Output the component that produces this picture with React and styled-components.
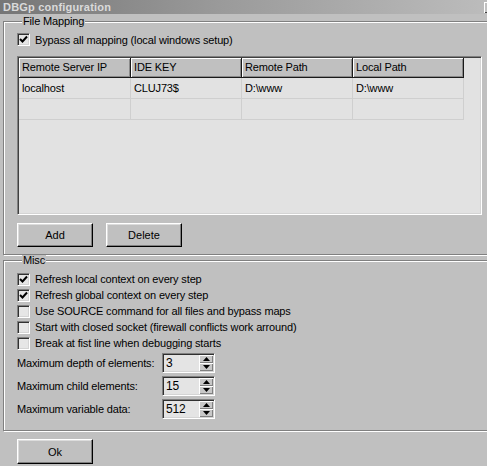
import React from 'react';
import styled, { createGlobalStyle } from 'styled-components';

const GlobalStyle = createGlobalStyle`
  html, body {
    margin: 0;
    padding: 0;
    background: #c0c0c0;
  }
  body {
    font-family: 'Liberation Sans', Arial, sans-serif;
    font-size: 11px;
    letter-spacing: -0.15px;
    color: #000;
  }
`;

const Window = styled.div`
  width: 487px;
  height: 466px;
  overflow: hidden;
  background: #c0c0c0;
`;

const TitleBar = styled.div`
  height: 14px;
  display: flex;
  align-items: center;
  justify-content: space-between;
  padding-left: 3px;
  background: linear-gradient(to right, #767676 0%, #9a9a9a 45%, #bcbcbc 100%);
  color: #dadada;
  font-weight: bold;
  font-size: 11px;
  letter-spacing: 0.2px;
`;

const TitleButton = styled.span`
  width: 14px;
  height: 11px;
  margin-right: -11px;
  background: #c0c0c0;
  box-shadow: inset 1px 1px #fff, inset -1px -1px #404040;
`;

const Body = styled.div`
  padding: 2px 0 0 3px;
  width: 520px;
`;

const Group = styled.fieldset`
  margin: 0;
  padding: ${(p) => p.$pad};
  min-inline-size: 0;
  border: 1px solid #808080;
  box-shadow: inset 1px 1px #fff, 1px 1px #fff;
  display: flex;
  flex-direction: column;
`;

const Legend = styled.legend`
  margin-left: 5px;
  padding: 0 1px;
  line-height: 11px;
  font-size: 11px;
  background: #c0c0c0;
`;

const CheckRow = styled.label`
  display: flex;
  align-items: center;
  gap: 5px;
  height: ${(p) => p.$h || 16}px;
  white-space: nowrap;
`;

const Box = styled.span`
  width: 13px;
  height: 13px;
  box-sizing: border-box;
  background: #e6e6e6;
  border-top: 1px solid #808080;
  border-left: 1px solid #808080;
  border-right: 1px solid #fff;
  border-bottom: 1px solid #fff;
  box-shadow: inset 1px 1px #303030, inset -1px -1px #d4d4d4;
  display: flex;
  align-items: center;
  justify-content: center;
`;

const Checkbox = ({ checked }) => (
  <Box>
    {checked && (
      <svg width="9" height="9" viewBox="0 0 9 9">
        <path d="M1 4 L3.5 6.5 L8 1.5" fill="none" stroke="#000" strokeWidth="2" />
      </svg>
    )}
  </Box>
);

const TablePanel = styled.div`
  margin-top: 10px;
  width: 465px;
  height: 159px;
  box-sizing: border-box;
  background: #e2e2e2;
  border-top: 1px solid #808080;
  border-left: 1px solid #808080;
  border-right: 1px solid #fff;
  border-bottom: 1px solid #fff;
  box-shadow: inset 1px 1px #404040, inset -1px -1px #d4d4d4;
  padding: 1px;
`;

const Grid = styled.div`
  display: grid;
  grid-template-columns: 112px 111px 111px 111px;
`;

const HeadCell = styled.div`
  height: 20px;
  box-sizing: border-box;
  padding-left: 3px;
  line-height: 19px;
  background: #c0c0c0;
  border-right: 1px solid #1a1a1a;
  border-bottom: 1px solid #1a1a1a;
  box-shadow: inset 1px 1px #fff, inset -1px -1px #8a8a8a;
  white-space: nowrap;
`;

const Cell = styled.div`
  height: 21px;
  box-sizing: border-box;
  padding-left: 3px;
  line-height: 20px;
  border-right: 1px solid #cfcfcf;
  border-bottom: 1px solid #cfcfcf;
  white-space: nowrap;
`;

const ButtonRow = styled.div`
  display: flex;
  gap: 13px;
  margin-top: 8px;
`;

const Button = styled.button`
  width: 76px;
  height: ${(p) => p.$h || 24}px;
  padding: 0;
  font-family: inherit;
  font-size: 11px;
  color: #000;
  background: #c0c0c0;
  border: none;
  border-top: 1px solid #fff;
  border-left: 1px solid #fff;
  border-right: 1px solid #000;
  border-bottom: 1px solid #000;
  box-shadow: inset -1px -1px #808080, inset 1px 1px #dcdcdc;
`;

const SpinList = styled.div`
  display: flex;
  flex-direction: column;
  gap: 3px;
  margin-top: 2px;
`;

const SpinRow = styled.div`
  display: grid;
  grid-template-columns: 145px 53px;
  align-items: center;
`;

const SpinBox = styled.div`
  height: 20px;
  box-sizing: border-box;
  display: flex;
  align-items: stretch;
  background: #e4e4e4;
  border-top: 1px solid #808080;
  border-left: 1px solid #808080;
  border-right: 1px solid #fff;
  border-bottom: 1px solid #fff;
  box-shadow: inset 1px 1px #303030, inset -1px -1px #d4d4d4;
  padding: 1px;
`;

const SpinValue = styled.span`
  flex: 1;
  padding-left: 2px;
  line-height: 17px;
  font-size: 12px;
`;

const SpinButtons = styled.span`
  width: 14px;
  display: flex;
  flex-direction: column;
`;

const SpinHalf = styled.span`
  flex: 1;
  background: #c8c8c8;
  box-shadow: inset 1px 1px #fff, inset -1px -1px #808080;
  display: flex;
  align-items: center;
  justify-content: center;
`;

const Arrow = ({ up }) => (
  <svg width="7" height="4" viewBox="0 0 7 4">
    <path d={up ? 'M0 4 L3.5 0 L7 4 Z' : 'M0 0 L7 0 L3.5 4 Z'} fill="#000" />
  </svg>
);

const Spin = ({ label, value }) => (
  <SpinRow>
    <span>{label}</span>
    <SpinBox>
      <SpinValue>{value}</SpinValue>
      <SpinButtons>
        <SpinHalf>
          <Arrow up />
        </SpinHalf>
        <SpinHalf>
          <Arrow />
        </SpinHalf>
      </SpinButtons>
    </SpinBox>
  </SpinRow>
);

const Footer = styled.div`
  padding: 8px 0 0 14px;
`;

const headers = ['Remote Server IP', 'IDE KEY', 'Remote Path', 'Local Path'];
const rows = [
  ['localhost', 'CLUJ73$', 'D:\\www', 'D:\\www'],
  ['', '', '', ''],
];

const miscOptions = [
  ['Refresh local context on every step', true],
  ['Refresh global context on every step', true],
  ['Use SOURCE command for all files and bypass maps', false],
  ['Start with closed socket (firewall conflicts work arround)', false],
  ['Break at fist line when debugging starts', false],
];

const spins = [
  ['Maximum depth of elements:', '3'],
  ['Maximum child elements:', '15'],
  ['Maximum variable data:', '512'],
];

export default function App() {
  return (
    <Window>
      <GlobalStyle />
      <TitleBar>
        <span>DBGp configuration</span>
        <TitleButton />
      </TitleBar>
      <Body>
        <Group $pad="6px 0 7px 13px">
          <Legend>File Mapping</Legend>
          <CheckRow $h={13}>
            <Checkbox checked />
            <span>Bypass all mapping (local windows setup)</span>
          </CheckRow>
          <TablePanel>
            <Grid>
              {headers.map((h) => (
                <HeadCell key={h}>{h}</HeadCell>
              ))}
              {rows.map((r, i) => r.map((c, j) => <Cell key={`${i}-${j}`}>{c}</Cell>))}
            </Grid>
          </TablePanel>
          <ButtonRow>
            <Button>Add</Button>
            <Button>Delete</Button>
          </ButtonRow>
        </Group>
        <Group $pad="5px 0 11px 13px">
          <Legend>Misc</Legend>
          {miscOptions.map(([text, checked]) => (
            <CheckRow key={text}>
              <Checkbox checked={checked} />
              <span>{text}</span>
            </CheckRow>
          ))}
          <SpinList>
            {spins.map(([label, value]) => (
              <Spin key={label} label={label} value={value} />
            ))}
          </SpinList>
        </Group>
        <Footer>
          <Button $h={25}>Ok</Button>
        </Footer>
      </Body>
    </Window>
  );
}
